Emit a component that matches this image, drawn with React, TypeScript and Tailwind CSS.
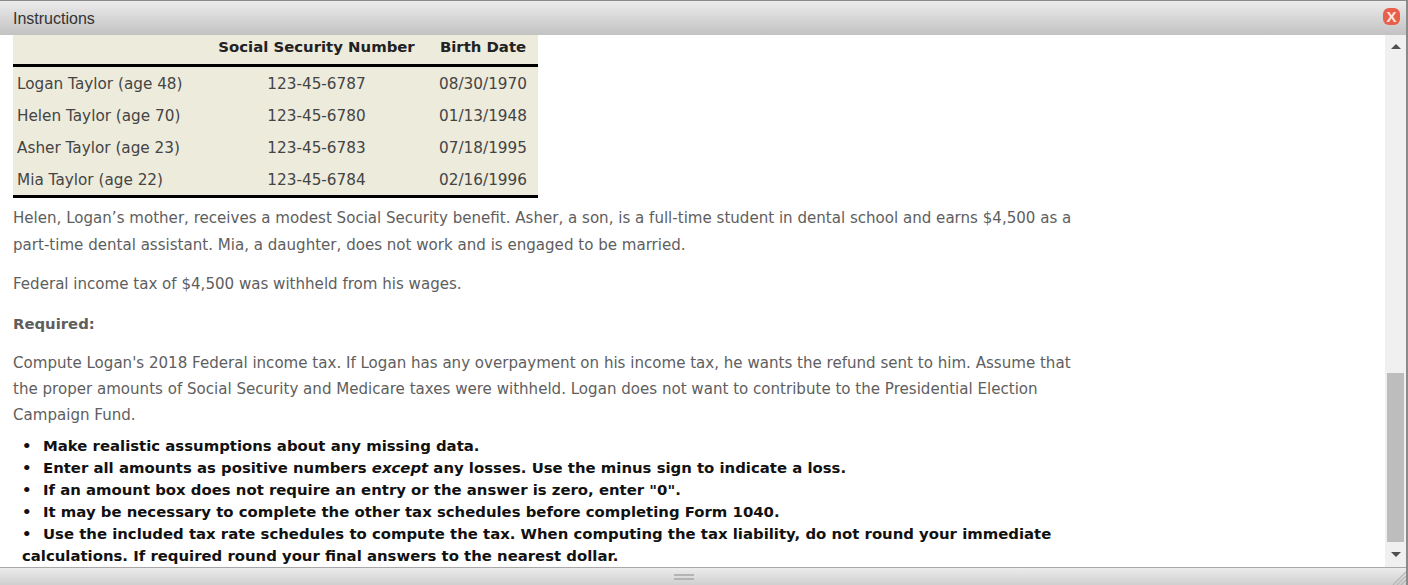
const people = [
  { name: 'Logan Taylor (age 48)', ssn: '123-45-6787', birth: '08/30/1970' },
  { name: 'Helen Taylor (age 70)', ssn: '123-45-6780', birth: '01/13/1948' },
  { name: 'Asher Taylor (age 23)', ssn: '123-45-6783', birth: '07/18/1995' },
  { name: 'Mia Taylor (age 22)', ssn: '123-45-6784', birth: '02/16/1996' },
];

const bullets = [
  <>Make realistic assumptions about any missing data.</>,
  <>Enter all amounts as positive numbers <em>except</em> any losses. Use the minus sign to indicate a loss.</>,
  <>If an amount box does not require an entry or the answer is zero, enter "0".</>,
  <>It may be necessary to complete the other tax schedules before completing Form 1040.</>,
];

export default function App() {
  return (
    <div className="h-[585px] w-[1408px] overflow-hidden bg-white flex flex-col border-t border-r-2 border-[#8a8a8a] font-['DejaVu_Sans',sans-serif]">
      {/* Title bar */}
      <div className="h-[34px] shrink-0 flex items-center justify-between pl-[13px] pr-[6px] bg-gradient-to-b from-[#ececec] to-[#c2c2c2]">
        <span className="font-['Liberation_Sans',sans-serif] text-[16px] text-[#333] pt-[1px]">Instructions</span>
        <button className="w-[17px] h-[17px] mb-[3px] rounded-[6px] bg-[#e8604c] flex items-center justify-center font-['Liberation_Sans',sans-serif] font-bold text-[15px] leading-none text-[#fde6df]">
          X
        </button>
      </div>

      <div className="flex-1 min-h-0 flex">
        {/* Content */}
        <div className="flex-1 min-w-0 overflow-hidden pl-[13px] text-[15.07px] text-[#5e5e5e]">
          <div className="w-[1065px]">
            <table className="w-[525px] bg-[#edebdc] border-separate border-spacing-0 text-[#444] table-fixed text-[15.25px]">
              <thead>
                <tr className="h-[32px]">
                  <th className="w-[192px] border-b-[3px] border-black"></th>
                  <th className="w-[223px] border-b-[3px] border-black text-center font-bold text-[#222] text-[14.88px] pb-[5px]">Social Security Number</th>
                  <th className="border-b-[3px] border-black text-center font-bold text-[#222] text-[14.88px] pb-[5px]">Birth Date</th>
                </tr>
              </thead>
              <tbody>
                {people.map((p, i) => {
                  const cell = i === people.length - 1 ? 'pt-[2px] border-b-[3px] border-black' : 'pt-[2px]';
                  return (
                    <tr key={p.name} className={i === people.length - 1 ? 'h-[35px]' : 'h-[32px]'}>
                      <td className={`pl-[4px] ${cell}`}>{p.name}</td>
                      <td className={`text-center ${cell}`}>{p.ssn}</td>
                      <td className={`text-center ${cell}`}>{p.birth}</td>
                    </tr>
                  );
                })}
              </tbody>
            </table>

            <p className="mt-[7px] leading-[26.5px]">
              Helen, Logan’s mother, receives a modest Social Security benefit. Asher, a son, is a full-time student in dental school and earns $4,500 as a part-time dental assistant. Mia, a daughter, does not work and is engaged to be married.
            </p>
            <p className="mt-[13px] leading-[26.5px]">Federal income tax of $4,500 was withheld from his wages.</p>
            <p className="mt-[13px] leading-[26.5px] font-bold text-[14.85px]">Required:</p>
            <p className="mt-[13px] leading-[26px]">
              Compute Logan's 2018 Federal income tax. If Logan has any overpayment on his income tax, he wants the refund sent to him. Assume that the proper amounts of Social Security and Medicare taxes were withheld. Logan does not want to contribute to the Presidential Election Campaign Fund.
            </p>
            <div className="mt-[7px] pl-[9px] font-bold text-[14.88px] text-[#111] leading-[22px]">
              {bullets.map((b, i) => (
                <div key={i}>
                  <span className="inline-block w-[21px]">•</span>
                  {b}
                </div>
              ))}
              <div>
                <span className="inline-block w-[21px]">•</span>
                Use the included tax rate schedules to compute the tax. When computing the tax liability, do not round your immediate calculations. If required round your final answers to the nearest dollar.
              </div>
            </div>
          </div>
        </div>

        {/* Scrollbar */}
        <div className="w-[21px] shrink-0 bg-[#f0f0f0] flex flex-col items-center">
          <div className="h-[22px] shrink-0 flex items-center justify-center">
            <div className="w-0 h-0 border-x-[5px] border-x-transparent border-b-[5px] border-b-[#505050]" />
          </div>
          <div className="flex-1 min-h-0 flex flex-col justify-end w-[17px]">
            <div className="h-[169px] bg-[#bdbdbd]" />
          </div>
          <div className="h-[25px] shrink-0 flex items-center justify-center">
            <div className="w-0 h-0 border-x-[5px] border-x-transparent border-t-[5px] border-t-[#505050]" />
          </div>
        </div>
      </div>

      {/* Resize footer */}
      <div className="relative h-[18px] shrink-0 border-t border-[#a8a8a8] bg-gradient-to-b from-[#ececec] to-[#cfcfcf] flex items-center justify-center pr-[38px]">
        <div className="w-[20px] h-[6px] border-y-2 border-[#b4b4b4]" />
        <svg className="absolute right-0 bottom-0" width="14" height="14" viewBox="0 0 14 14">
          <path d="M14 1 1 14M14 5 5 14M14 9 9 14" stroke="#b5b5b5" strokeWidth="1.2" />
        </svg>
      </div>
    </div>
  );
}
